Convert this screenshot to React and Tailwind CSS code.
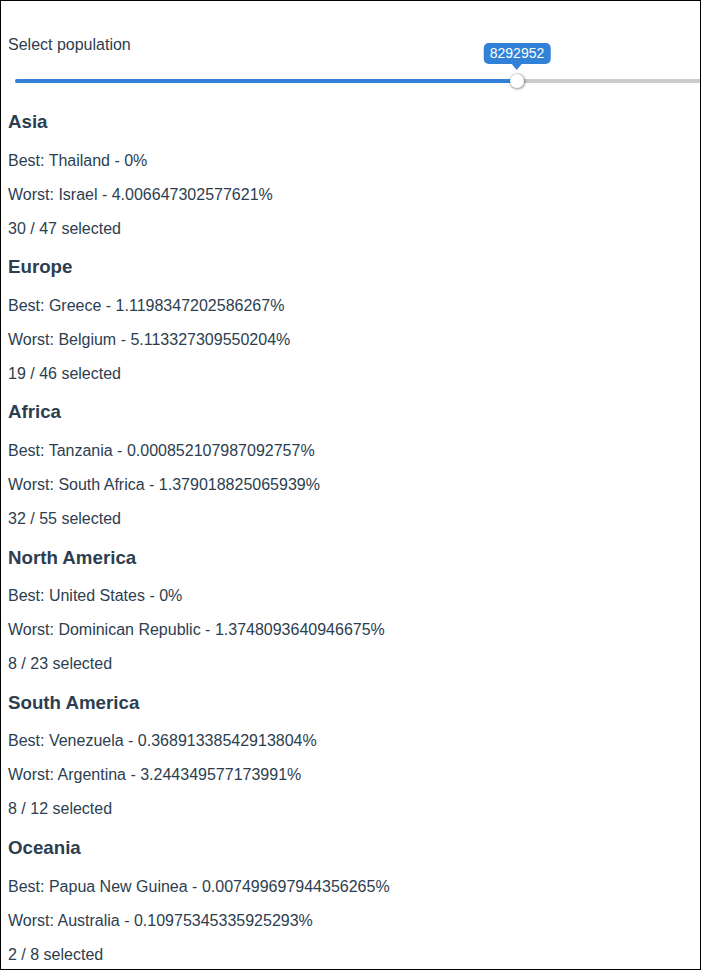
import React from "react";

const regions = [
  {
    name: "Asia",
    best: "Thailand - 0%",
    worst: "Israel - 4.006647302577621%",
    selected: "30 / 47 selected",
  },
  {
    name: "Europe",
    best: "Greece - 1.1198347202586267%",
    worst: "Belgium - 5.113327309550204%",
    selected: "19 / 46 selected",
  },
  {
    name: "Africa",
    best: "Tanzania - 0.000852107987092757%",
    worst: "South Africa - 1.379018825065939%",
    selected: "32 / 55 selected",
  },
  {
    name: "North America",
    best: "United States - 0%",
    worst: "Dominican Republic - 1.3748093640946675%",
    selected: "8 / 23 selected",
  },
  {
    name: "South America",
    best: "Venezuela - 0.36891338542913804%",
    worst: "Argentina - 3.244349577173991%",
    selected: "8 / 12 selected",
  },
  {
    name: "Oceania",
    best: "Papua New Guinea - 0.007499697944356265%",
    worst: "Australia - 0.10975345335925293%",
    selected: "2 / 8 selected",
  },
];

function Slider({ value, filled }) {
  return (
    <div className="relative mt-[25px] ml-[7px] h-[4px] w-[720px] rounded-full bg-[#cccccc]">
      <div
        className="h-full rounded-full bg-[#3182d6]"
        style={{ width: filled }}
      />
      <div
        className="absolute top-[-5px] h-[14px] w-[14px] rounded-full bg-white shadow-[0.5px_0.5px_2px_1px_rgba(0,0,0,0.32)]"
        style={{ left: filled - 7 }}
      >
        <div className="absolute bottom-[18px] left-1/2 -translate-x-1/2">
          <div className="rounded-[5px] bg-[#3182d6] px-[6px] py-[2px] text-[14px] leading-[17px] whitespace-nowrap text-white">
            {value}
          </div>
          <div className="mx-auto h-0 w-0 border-x-[5px] border-t-[6px] border-x-transparent border-t-[#3182d6]" />
        </div>
      </div>
    </div>
  );
}

function App() {
  return (
    <div
      className="h-[970px] w-[701px] overflow-hidden border border-black bg-white pl-[7px] text-[#2c3e50]"
      style={{ fontFamily: '"Liberation Sans", Helvetica, Arial, sans-serif' }}
    >
      <p className="mt-[35px] text-[16px] leading-[18px]">Select population</p>
      <Slider value="8292952" filled={502} />
      <div className="mt-[28px]">
        {regions.map((r, i) => (
          <div key={r.name} className={i > 0 ? "mt-[18.5px]" : ""}>
            <h3 className="text-[18.72px] font-bold leading-[22px]">{r.name}</h3>
            <p className="mt-[18.7px] text-[16px] leading-[18px]">Best: {r.best}</p>
            <p className="mt-[16px] text-[16px] leading-[18px]">Worst: {r.worst}</p>
            <p className="mt-[16px] text-[16px] leading-[18px]">{r.selected}</p>
          </div>
        ))}
      </div>
    </div>
  );
}

export default App;
